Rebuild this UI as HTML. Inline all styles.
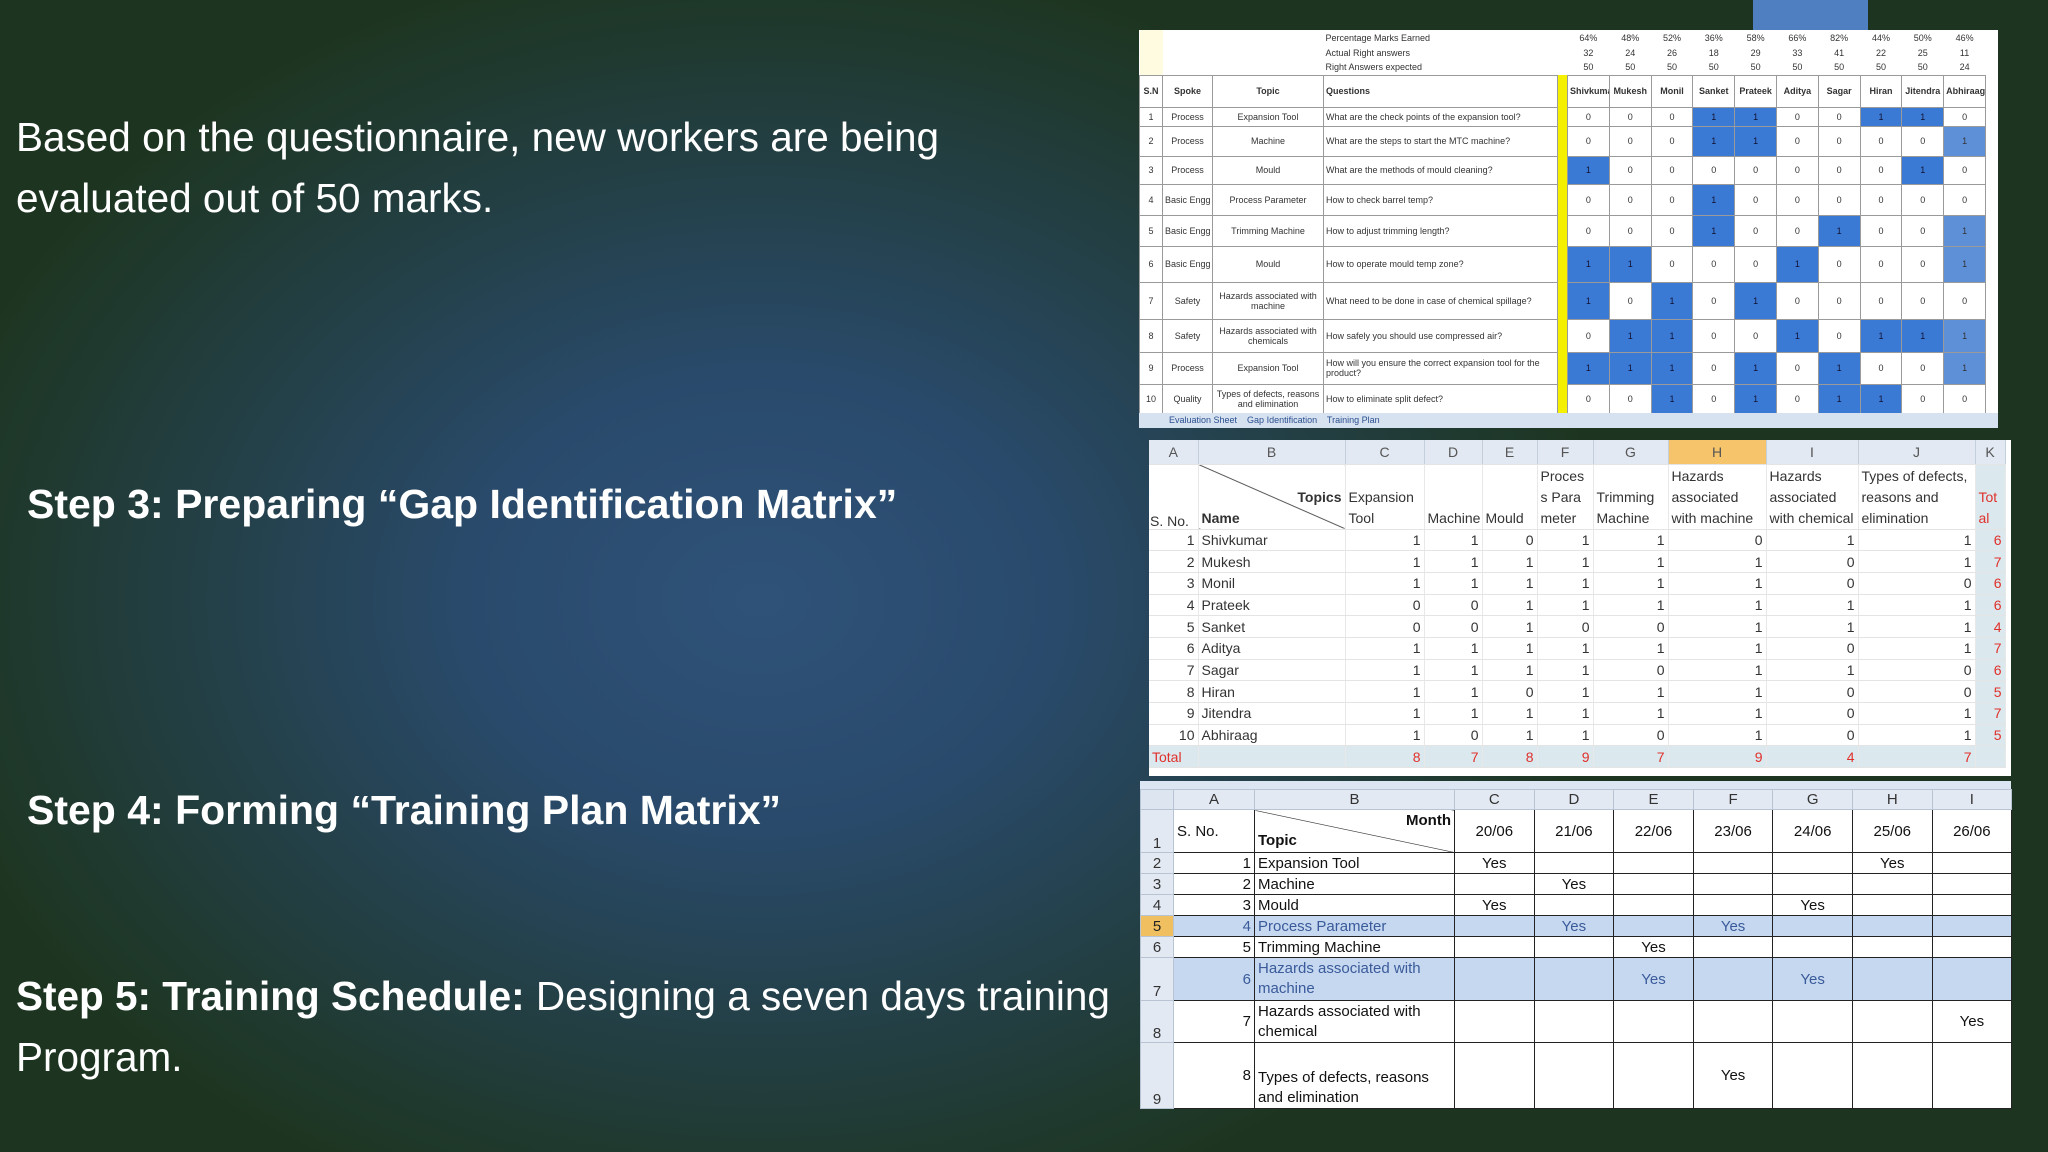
<!DOCTYPE html>
<html><head><meta charset="utf-8"><style>
*{margin:0;padding:0;box-sizing:border-box}
body{width:2048px;height:1152px;overflow:hidden;position:relative;font-family:"Liberation Sans",sans-serif;
background:radial-gradient(ellipse 850px 650px at 760px 600px,#2f5279 0%,#294a6b 35%,#233f44 68%,#1d3520 100%);background-color:#1d3520}
.t{position:absolute;color:#fff}
table{border-collapse:collapse;table-layout:fixed;position:absolute;font-family:"Liberation Sans Narrow","Liberation Sans",sans-serif;background:#fff}
td{overflow:hidden;white-space:nowrap;padding:0 2px}
#t1 td{border:1px solid #9a9a9a;font-size:9px;color:#333;text-align:center;line-height:10px}
#t1 .b{background:#3b7ad4;color:#113}
#t1 .l{background:#5e90d8}
#t1 .y{background:#f5f000;border:none}
#t2 td{font-size:14px;color:#333;border-bottom:1px solid #e4e4e4;border-right:1px solid #e8e8e8;text-align:right;padding:0 3px}
#t2 .h{background:#e3e9f2;text-align:center;color:#555;border-right:1px solid #c5cfdc}
#t2 .r{color:#e0302a}
#t2 .k{background:#dbe9ef}
#t3 td{font-size:15px;color:#111;border:1.5px solid #222;text-align:center;padding:0 3px}
#t3 .h{background:#e3e9f2;color:#333;border:1px solid #b8c4d4}
#t3 .s td{background:#c5d8f0;color:#3a5a9a}
#t3 .s td.n{background:#f0c060;color:#222}
</style></head><body>
<div class="t" style="left:16px;top:107px;font-size:40.5px;line-height:61px">Based on the questionnaire, new workers are being<br>evaluated out of 50 marks.</div>
<div class="t" style="left:27px;top:481px;font-size:41px;font-weight:bold">Step 3: Preparing “Gap Identification Matrix”</div>
<div class="t" style="left:27px;top:787px;font-size:41px;font-weight:bold">Step 4: Forming “Training Plan Matrix”</div>
<div class="t" style="left:16px;top:966px;font-size:40.5px;line-height:61px"><b>Step 5: Training Schedule:</b> Designing a seven days training<br>Program.</div>

<div style="position:absolute;left:1753px;top:0;width:115px;height:32px;background:#4f7fc0"></div>

<div style="position:absolute;left:1139px;top:30px;width:859px;height:398px;background:#fff"></div>
<table id="t1" style="left:1139px;top:30px;width:846px">
<colgroup><col style="width:23px"><col style="width:50px"><col style="width:111px"><col style="width:234px"><col style="width:10px"><col span="10" style="width:41.8px"></colgroup>
<tr style="height:15px"><td style="border:none;background:#fffbe0"></td><td style="border:none"></td><td style="border:none"></td><td style="border:none;text-align:left">Percentage Marks Earned</td><td style="border:none"></td><td style="border:none">64%</td><td style="border:none">48%</td><td style="border:none">52%</td><td style="border:none">36%</td><td style="border:none">58%</td><td style="border:none">66%</td><td style="border:none">82%</td><td style="border:none">44%</td><td style="border:none">50%</td><td style="border:none">46%</td></tr>
<tr style="height:15px"><td style="border:none;background:#fffbe0"></td><td style="border:none"></td><td style="border:none"></td><td style="border:none;text-align:left">Actual Right answers</td><td style="border:none"></td><td style="border:none">32</td><td style="border:none">24</td><td style="border:none">26</td><td style="border:none">18</td><td style="border:none">29</td><td style="border:none">33</td><td style="border:none">41</td><td style="border:none">22</td><td style="border:none">25</td><td style="border:none">11</td></tr>
<tr style="height:15px"><td style="border:none;background:#fffbe0"></td><td style="border:none"></td><td style="border:none"></td><td style="border:none;text-align:left">Right Answers expected</td><td style="border:none"></td><td style="border:none">50</td><td style="border:none">50</td><td style="border:none">50</td><td style="border:none">50</td><td style="border:none">50</td><td style="border:none">50</td><td style="border:none">50</td><td style="border:none">50</td><td style="border:none">50</td><td style="border:none">24</td></tr>
<tr style="height:32px;font-weight:bold"><td>S.N</td><td>Spoke</td><td>Topic</td><td style="text-align:left">Questions</td><td class="y"></td><td>Shivkumar</td><td>Mukesh</td><td>Monil</td><td>Sanket</td><td>Prateek</td><td>Aditya</td><td>Sagar</td><td>Hiran</td><td>Jitendra</td><td>Abhiraag</td></tr>
<tr style="height:19px"><td>1</td><td>Process</td><td>Expansion Tool</td><td style="text-align:left">What are the check points of the expansion tool?</td><td class="y"></td><td>0</td><td>0</td><td>0</td><td class="b">1</td><td class="b">1</td><td>0</td><td>0</td><td class="b">1</td><td class="b">1</td><td>0</td></tr>
<tr style="height:30px"><td>2</td><td>Process</td><td>Machine</td><td style="text-align:left">What are the steps to start the MTC machine?</td><td class="y"></td><td>0</td><td>0</td><td>0</td><td class="b">1</td><td class="b">1</td><td>0</td><td>0</td><td>0</td><td>0</td><td class="l">1</td></tr>
<tr style="height:28px"><td>3</td><td>Process</td><td>Mould</td><td style="text-align:left">What are the methods of mould cleaning?</td><td class="y"></td><td class="b">1</td><td>0</td><td>0</td><td>0</td><td>0</td><td>0</td><td>0</td><td>0</td><td class="b">1</td><td>0</td></tr>
<tr style="height:31px"><td>4</td><td>Basic Engg</td><td>Process Parameter</td><td style="text-align:left">How to check barrel temp?</td><td class="y"></td><td>0</td><td>0</td><td>0</td><td class="b">1</td><td>0</td><td>0</td><td>0</td><td>0</td><td>0</td><td>0</td></tr>
<tr style="height:31px"><td>5</td><td>Basic Engg</td><td>Trimming Machine</td><td style="text-align:left">How to adjust trimming length?</td><td class="y"></td><td>0</td><td>0</td><td>0</td><td class="b">1</td><td>0</td><td>0</td><td class="b">1</td><td>0</td><td>0</td><td class="l">1</td></tr>
<tr style="height:36px"><td>6</td><td>Basic Engg</td><td>Mould</td><td style="text-align:left">How to operate mould temp zone?</td><td class="y"></td><td class="b">1</td><td class="b">1</td><td>0</td><td>0</td><td>0</td><td class="b">1</td><td>0</td><td>0</td><td>0</td><td class="l">1</td></tr>
<tr style="height:37px"><td>7</td><td>Safety</td><td style="white-space:normal">Hazards associated with machine</td><td style="text-align:left">What need to be done in case of chemical spillage?</td><td class="y"></td><td class="b">1</td><td>0</td><td class="b">1</td><td>0</td><td class="b">1</td><td>0</td><td>0</td><td>0</td><td>0</td><td>0</td></tr>
<tr style="height:33px"><td>8</td><td>Safety</td><td style="white-space:normal">Hazards associated with chemicals</td><td style="text-align:left">How safely you should use compressed air?</td><td class="y"></td><td>0</td><td class="b">1</td><td class="b">1</td><td>0</td><td>0</td><td class="b">1</td><td>0</td><td class="b">1</td><td class="b">1</td><td class="l">1</td></tr>
<tr style="height:32px"><td>9</td><td>Process</td><td>Expansion Tool</td><td style="text-align:left;white-space:normal">How will you ensure the correct expansion tool for the product?</td><td class="y"></td><td class="b">1</td><td class="b">1</td><td class="b">1</td><td>0</td><td class="b">1</td><td>0</td><td class="b">1</td><td>0</td><td>0</td><td class="l">1</td></tr>
<tr style="height:30px"><td>10</td><td>Quality</td><td style="white-space:normal">Types of defects, reasons and elimination</td><td style="text-align:left">How to eliminate split defect?</td><td class="y"></td><td>0</td><td>0</td><td class="b">1</td><td>0</td><td class="b">1</td><td>0</td><td class="b">1</td><td class="b">1</td><td>0</td><td>0</td></tr>
</table>
<div style="position:absolute;left:1139px;top:413px;width:859px;height:15px;background:#d6e2f0;font:9px 'Liberation Sans Narrow',sans-serif;color:#2a4f90;padding:2px 30px">Evaluation Sheet &nbsp;&nbsp; Gap Identification &nbsp;&nbsp; Training Plan</div>

<div style="position:absolute;left:1149px;top:440px;width:862px;height:336px;background:#fff"></div>
<table id="t2" style="left:1149px;top:440px;width:856px">
<colgroup><col style="width:49px"><col style="width:147px"><col style="width:79px"><col style="width:58px"><col style="width:55px"><col style="width:56px"><col style="width:75px"><col style="width:98px"><col style="width:92px"><col style="width:117px"><col style="width:30px"></colgroup>
<tr style="height:24px"><td class="h">A</td><td class="h">B</td><td class="h">C</td><td class="h">D</td><td class="h">E</td><td class="h">F</td><td class="h">G</td><td class="h" style="background:#f6c46a">H</td><td class="h">I</td><td class="h">J</td><td class="h">K</td></tr>
<tr style="height:65px;vertical-align:bottom"><td style="text-align:left;padding:0 1px">S. No.</td><td style="text-align:left;background:linear-gradient(to top right,#fff 49.3%,#333 50%,#fff 50.7%);line-height:21px"><div style="text-align:right;font-weight:bold">Topics</div><b>Name</b></td><td style="text-align:left;white-space:normal;line-height:21px">Expansion Tool</td><td style="text-align:left;line-height:21px">Machine</td><td style="text-align:left;line-height:21px">Mould</td><td style="text-align:left;white-space:normal;line-height:21px;word-break:break-all">Process Parameter</td><td style="text-align:left;white-space:normal;line-height:21px">Trimming Machine</td><td style="text-align:left;white-space:normal;line-height:21px">Hazards associated with machine</td><td style="text-align:left;white-space:normal;line-height:21px">Hazards associated with chemical</td><td style="text-align:left;white-space:normal;line-height:21px">Types of defects, reasons and elimination</td><td class="k r" style="text-align:left;white-space:normal;line-height:21px;word-break:break-all">Total</td></tr>
<tr style="height:21.7px"><td>1</td><td style="text-align:left">Shivkumar</td><td>1</td><td>1</td><td>0</td><td>1</td><td>1</td><td>0</td><td>1</td><td>1</td><td class="k r">6</td></tr>
<tr style="height:21.7px"><td>2</td><td style="text-align:left">Mukesh</td><td>1</td><td>1</td><td>1</td><td>1</td><td>1</td><td>1</td><td>0</td><td>1</td><td class="k r">7</td></tr>
<tr style="height:21.7px"><td>3</td><td style="text-align:left">Monil</td><td>1</td><td>1</td><td>1</td><td>1</td><td>1</td><td>1</td><td>0</td><td>0</td><td class="k r">6</td></tr>
<tr style="height:21.7px"><td>4</td><td style="text-align:left">Prateek</td><td>0</td><td>0</td><td>1</td><td>1</td><td>1</td><td>1</td><td>1</td><td>1</td><td class="k r">6</td></tr>
<tr style="height:21.7px"><td>5</td><td style="text-align:left">Sanket</td><td>0</td><td>0</td><td>1</td><td>0</td><td>0</td><td>1</td><td>1</td><td>1</td><td class="k r">4</td></tr>
<tr style="height:21.7px"><td>6</td><td style="text-align:left">Aditya</td><td>1</td><td>1</td><td>1</td><td>1</td><td>1</td><td>1</td><td>0</td><td>1</td><td class="k r">7</td></tr>
<tr style="height:21.7px"><td>7</td><td style="text-align:left">Sagar</td><td>1</td><td>1</td><td>1</td><td>1</td><td>0</td><td>1</td><td>1</td><td>0</td><td class="k r">6</td></tr>
<tr style="height:21.7px"><td>8</td><td style="text-align:left">Hiran</td><td>1</td><td>1</td><td>0</td><td>1</td><td>1</td><td>1</td><td>0</td><td>0</td><td class="k r">5</td></tr>
<tr style="height:21.7px"><td>9</td><td style="text-align:left">Jitendra</td><td>1</td><td>1</td><td>1</td><td>1</td><td>1</td><td>1</td><td>0</td><td>1</td><td class="k r">7</td></tr>
<tr style="height:21.7px"><td>10</td><td style="text-align:left">Abhiraag</td><td>1</td><td>0</td><td>1</td><td>1</td><td>0</td><td>1</td><td>0</td><td>1</td><td class="k r">5</td></tr>
<tr style="height:21.7px;background:#dbe9ef"><td class="r" style="text-align:left">Total</td><td></td><td class="r">8</td><td class="r">7</td><td class="r">8</td><td class="r">9</td><td class="r">7</td><td class="r">9</td><td class="r">4</td><td class="r">7</td><td class="k"></td></tr>
</table>

<div style="position:absolute;left:1140px;top:781px;width:871px;height:8px;background:#dce6f2"></div>
<table id="t3" style="left:1140px;top:789px;width:871px">
<colgroup><col style="width:33px"><col style="width:81px"><col style="width:200px"><col span="7" style="width:79.6px"></colgroup>
<tr style="height:20px"><td class="h" style="background:#dde6f0"></td><td class="h">A</td><td class="h">B</td><td class="h">C</td><td class="h">D</td><td class="h">E</td><td class="h">F</td><td class="h">G</td><td class="h">H</td><td class="h">I</td></tr>
<tr style="height:43px"><td class="h" style="vertical-align:bottom">1</td><td style="text-align:left">S. No.</td><td style="text-align:left;background:linear-gradient(to bottom left,#fff 49.3%,#222 50%,#fff 50.7%);line-height:20px"><div style="text-align:right;font-weight:bold">Month</div><b>Topic</b></td><td>20/06</td><td>21/06</td><td>22/06</td><td>23/06</td><td>24/06</td><td>25/06</td><td>26/06</td></tr>
<tr style="height:21px"><td class="h">2</td><td style="text-align:right">1</td><td style="text-align:left">Expansion Tool</td><td>Yes</td><td></td><td></td><td></td><td></td><td>Yes</td><td></td></tr>
<tr style="height:21px"><td class="h">3</td><td style="text-align:right">2</td><td style="text-align:left">Machine</td><td></td><td>Yes</td><td></td><td></td><td></td><td></td><td></td></tr>
<tr style="height:21px"><td class="h">4</td><td style="text-align:right">3</td><td style="text-align:left">Mould</td><td>Yes</td><td></td><td></td><td></td><td>Yes</td><td></td><td></td></tr>
<tr class="s" style="height:21px"><td class="h n">5</td><td style="text-align:right">4</td><td style="text-align:left">Process Parameter</td><td></td><td>Yes</td><td></td><td>Yes</td><td></td><td></td><td></td></tr>
<tr style="height:21px"><td class="h">6</td><td style="text-align:right">5</td><td style="text-align:left">Trimming Machine</td><td></td><td></td><td>Yes</td><td></td><td></td><td></td><td></td></tr>
<tr class="s" style="height:43px"><td class="h" style="vertical-align:bottom;background:#e3e9f2;color:#333">7</td><td style="text-align:right">6</td><td style="text-align:left;white-space:normal;line-height:20px">Hazards associated with machine</td><td></td><td></td><td>Yes</td><td></td><td>Yes</td><td></td><td></td></tr>
<tr style="height:42px"><td class="h" style="vertical-align:bottom">8</td><td style="text-align:right">7</td><td style="text-align:left;white-space:normal;line-height:20px">Hazards associated with chemical</td><td></td><td></td><td></td><td></td><td></td><td></td><td>Yes</td></tr>
<tr style="height:66px"><td class="h" style="vertical-align:bottom">9</td><td style="text-align:right">8</td><td style="text-align:left;white-space:normal;line-height:20px;vertical-align:bottom">Types of defects, reasons and elimination</td><td></td><td></td><td></td><td>Yes</td><td></td><td></td><td></td></tr>
</table>
</body></html>
